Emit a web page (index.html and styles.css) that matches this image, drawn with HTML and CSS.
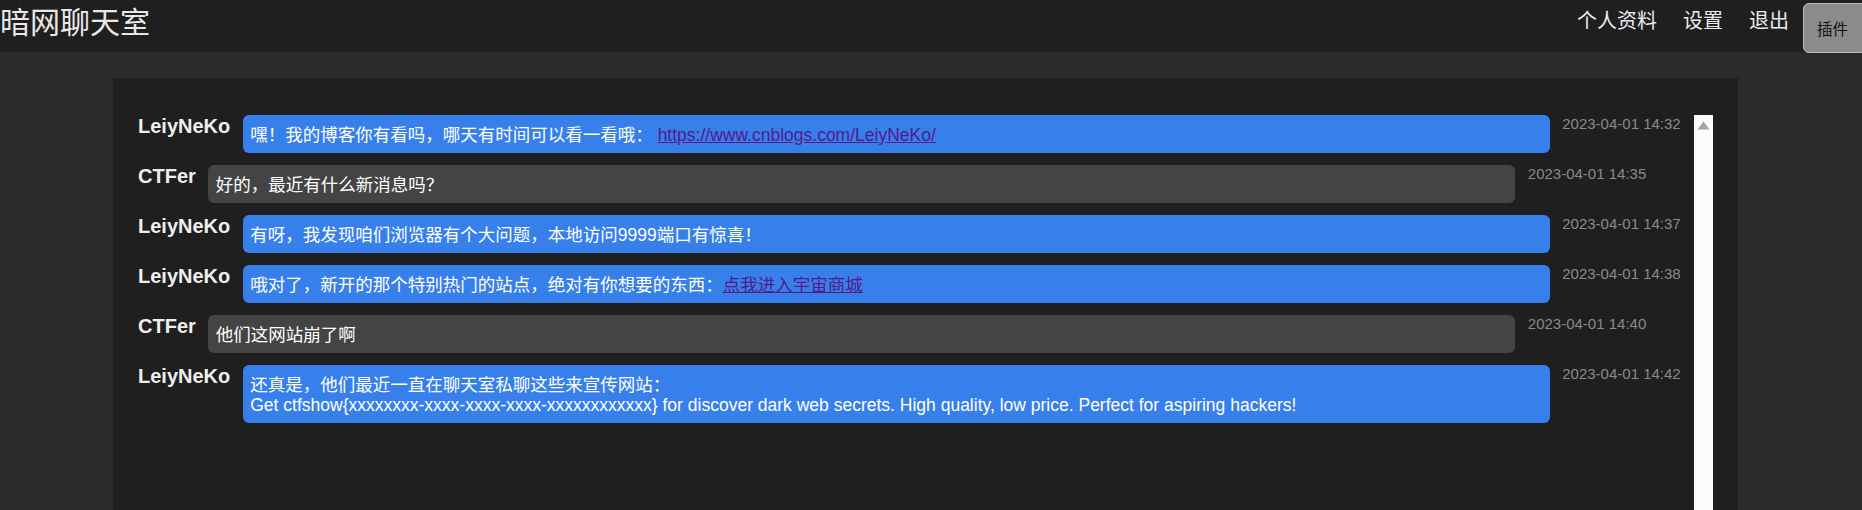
FILE: index.html
```html
<!DOCTYPE html>
<html lang="zh-CN">
<head>
<meta charset="utf-8">
<title>暗网聊天室</title>
<link rel="stylesheet" href="styles.css">
</head>
<body>
<header class="topbar">
  <div class="brand">暗网聊天室</div>
  <nav class="nav">
    <a class="nav-link" href="#">个人资料</a>
    <a class="nav-link" href="#">设置</a>
    <a class="nav-link" href="#">退出</a>
  </nav>
  <button class="plugin-btn">插件</button>
</header>
<main class="chat">
  <div class="messages">
    <div class="row">
      <div class="name">LeiyNeKo</div>
      <div class="bubble blue">嘿！我的博客你有看吗，哪天有时间可以看一看哦： <a class="link" href="#">https://www.cnblogs.com/LeiyNeKo/</a></div>
      <div class="time">2023-04-01 14:32</div>
    </div>
    <div class="row">
      <div class="name">CTFer</div>
      <div class="bubble gray">好的，最近有什么新消息吗？</div>
      <div class="time">2023-04-01 14:35</div>
    </div>
    <div class="row">
      <div class="name">LeiyNeKo</div>
      <div class="bubble blue">有呀，我发现咱们浏览器有个大问题，本地访问9999端口有惊喜！</div>
      <div class="time">2023-04-01 14:37</div>
    </div>
    <div class="row">
      <div class="name">LeiyNeKo</div>
      <div class="bubble blue">哦对了，新开的那个特别热门的站点，绝对有你想要的东西：<a class="link" href="#">点我进入宇宙商城</a></div>
      <div class="time">2023-04-01 14:38</div>
    </div>
    <div class="row">
      <div class="name">CTFer</div>
      <div class="bubble gray">他们这网站崩了啊</div>
      <div class="time">2023-04-01 14:40</div>
    </div>
    <div class="row">
      <div class="name">LeiyNeKo</div>
      <div class="bubble blue">还真是，他们最近一直在聊天室私聊这些来宣传网站：<br>Get ctfshow{xxxxxxxx-xxxx-xxxx-xxxx-xxxxxxxxxxxx} for discover dark web secrets. High quality, low price. Perfect for aspiring hackers!</div>
      <div class="time">2023-04-01 14:42</div>
    </div>
  </div>
  <div class="scrollbar">
    <svg class="arrow" width="13" height="9" viewBox="0 0 13 9"><path d="M6.5 0.5 L12.5 8.5 L0.5 8.5 Z" fill="#a3a3a3"/></svg>
  </div>
</main>
</body>
</html>
```
FILE: styles.css
```css
html, body {
  margin: 0;
  padding: 0;
}
body {
  background: #2b2b2b;
  font-family: "Liberation Sans", "Noto Sans CJK SC", sans-serif;
  height: 510px;
  overflow: hidden;
}
.topbar {
  position: relative;
  height: 52px;
  background: #1f1f1f;
  display: flex;
  justify-content: space-between;
  align-items: flex-start;
}
.brand {
  font-family: "Noto Sans CJK SC", sans-serif;
  font-size: 30px;
  line-height: 40px;
  color: #e8e8e8;
  padding-left: 0;
}
.nav {
  display: flex;
  gap: 26px;
  padding-right: 73px;
}
.nav-link {
  font-family: "Noto Sans CJK SC", sans-serif;
  font-size: 20px;
  line-height: 40px;
  color: #ececec;
  text-decoration: none;
}
.plugin-btn {
  position: absolute;
  top: 3px;
  left: 1803px;
  width: 64px;
  height: 50px;
  padding: 0 0 0 13px;
  text-align: left;
  background: #8b8b8b;
  border: 1.5px solid #bdbdbd;
  border-radius: 6px;
  color: #111;
  font-family: "Noto Sans CJK SC", sans-serif;
  font-size: 15.5px;
}
.chat {
  margin: 26px 0 0 113px;
  width: 1625px;
  height: 432px;
  box-sizing: border-box;
  padding: 37px 25px 0 25px;
  background: #1f1f1f;
  display: flex;
}
.messages {
  flex: 1;
}
.row {
  display: flex;
  align-items: flex-start;
  margin-bottom: 12.5px;
}
.name {
  font-weight: bold;
  font-size: 20px;
  line-height: 23px;
  color: #eeeeee;
  margin-right: 12.5px;
}
.bubble {
  flex: none;
  width: 1307px;
  box-sizing: border-box;
  padding: 10px 7.5px 7.5px 7.5px;
  border-radius: 6px;
  font-size: 17.5px;
  line-height: 20px;
  color: #ffffff;
}
.blue {
  background: #377fea;
}
.gray {
  background: #444444;
}
.link {
  color: #551a8b;
  text-decoration: underline;
}
.time {
  margin-left: 12.5px;
  font-size: 15px;
  line-height: 17px;
  color: #8a8a8a;
  white-space: nowrap;
}
.scrollbar {
  width: 19px;
  flex: none;
  background: #fcfcfc;
  display: flex;
  justify-content: center;
  align-items: flex-start;
  padding-top: 6px;
  box-sizing: border-box;
}
.arrow {
  display: block;
}
```
